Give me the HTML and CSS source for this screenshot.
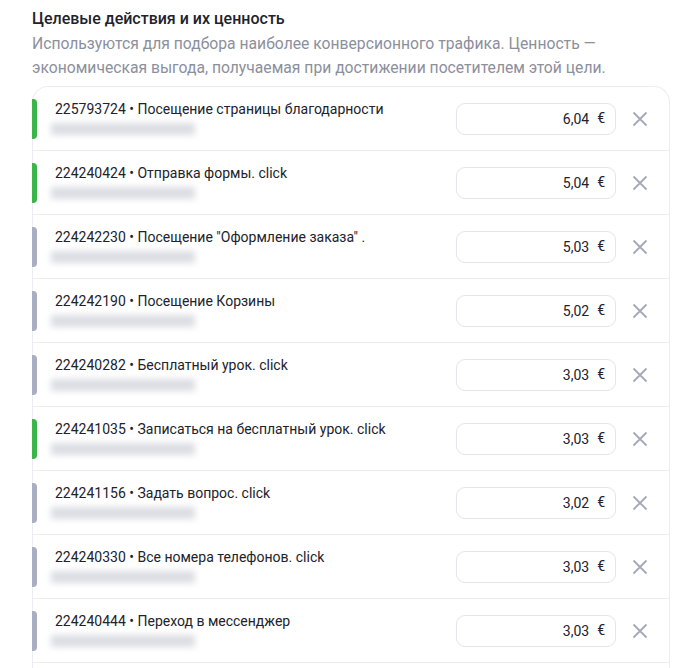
FILE: index.html
```html
<!DOCTYPE html>
<html lang="ru">
<head>
    <meta charset="UTF-8">
    <meta name="viewport" content="width=device-width, initial-scale=1.0">
    <title>Целевые действия</title>
    <link rel="stylesheet" href="styles.css">
</head>
<body>
    <div class="section">
        <h2 class="title">Целевые действия и их ценность</h2>
        <p class="hint">Используются для подбора наиболее конверсионного трафика. Ценность —
            экономическая выгода, получаемая при достижении посетителем этой цели.</p>

        <div class="goals">
            <div class="goal">
                <span class="mark mark-on"></span>
                <div class="goal-info">
                    <div class="goal-name">225793724 • Посещение страницы благодарности</div>
                    <div class="goal-sub"></div>
                </div>
                <div class="price"><span>6,04</span><span class="cur">€</span></div>
                <button class="remove" aria-label="Удалить"><svg viewBox="0 0 16 16"><path d="M1.5 1.5l13 13M14.5 1.5l-13 13"/></svg></button>
            </div>
            <div class="goal">
                <span class="mark mark-on"></span>
                <div class="goal-info">
                    <div class="goal-name">224240424 • Отправка формы. click</div>
                    <div class="goal-sub"></div>
                </div>
                <div class="price"><span>5,04</span><span class="cur">€</span></div>
                <button class="remove" aria-label="Удалить"><svg viewBox="0 0 16 16"><path d="M1.5 1.5l13 13M14.5 1.5l-13 13"/></svg></button>
            </div>
            <div class="goal">
                <span class="mark"></span>
                <div class="goal-info">
                    <div class="goal-name">224242230 • Посещение "Оформление заказа" .</div>
                    <div class="goal-sub"></div>
                </div>
                <div class="price"><span>5,03</span><span class="cur">€</span></div>
                <button class="remove" aria-label="Удалить"><svg viewBox="0 0 16 16"><path d="M1.5 1.5l13 13M14.5 1.5l-13 13"/></svg></button>
            </div>
            <div class="goal">
                <span class="mark"></span>
                <div class="goal-info">
                    <div class="goal-name">224242190 • Посещение Корзины</div>
                    <div class="goal-sub"></div>
                </div>
                <div class="price"><span>5,02</span><span class="cur">€</span></div>
                <button class="remove" aria-label="Удалить"><svg viewBox="0 0 16 16"><path d="M1.5 1.5l13 13M14.5 1.5l-13 13"/></svg></button>
            </div>
            <div class="goal">
                <span class="mark"></span>
                <div class="goal-info">
                    <div class="goal-name">224240282 • Бесплатный урок. click</div>
                    <div class="goal-sub"></div>
                </div>
                <div class="price"><span>3,03</span><span class="cur">€</span></div>
                <button class="remove" aria-label="Удалить"><svg viewBox="0 0 16 16"><path d="M1.5 1.5l13 13M14.5 1.5l-13 13"/></svg></button>
            </div>
            <div class="goal">
                <span class="mark mark-on"></span>
                <div class="goal-info">
                    <div class="goal-name">224241035 • Записаться на бесплатный урок. click</div>
                    <div class="goal-sub"></div>
                </div>
                <div class="price"><span>3,03</span><span class="cur">€</span></div>
                <button class="remove" aria-label="Удалить"><svg viewBox="0 0 16 16"><path d="M1.5 1.5l13 13M14.5 1.5l-13 13"/></svg></button>
            </div>
            <div class="goal">
                <span class="mark"></span>
                <div class="goal-info">
                    <div class="goal-name">224241156 • Задать вопрос. click</div>
                    <div class="goal-sub"></div>
                </div>
                <div class="price"><span>3,02</span><span class="cur">€</span></div>
                <button class="remove" aria-label="Удалить"><svg viewBox="0 0 16 16"><path d="M1.5 1.5l13 13M14.5 1.5l-13 13"/></svg></button>
            </div>
            <div class="goal">
                <span class="mark"></span>
                <div class="goal-info">
                    <div class="goal-name">224240330 • Все номера телефонов. click</div>
                    <div class="goal-sub"></div>
                </div>
                <div class="price"><span>3,03</span><span class="cur">€</span></div>
                <button class="remove" aria-label="Удалить"><svg viewBox="0 0 16 16"><path d="M1.5 1.5l13 13M14.5 1.5l-13 13"/></svg></button>
            </div>
            <div class="goal">
                <span class="mark"></span>
                <div class="goal-info">
                    <div class="goal-name">224240444 • Переход в мессенджер</div>
                    <div class="goal-sub"></div>
                </div>
                <div class="price"><span>3,03</span><span class="cur">€</span></div>
                <button class="remove" aria-label="Удалить"><svg viewBox="0 0 16 16"><path d="M1.5 1.5l13 13M14.5 1.5l-13 13"/></svg></button>
            </div>
            <div class="goal">
                <span class="mark"></span>
                <div class="goal-info">
                    <div class="goal-name"></div>
                </div>
            </div>
        </div>
    </div>
</body>
</html>
```

FILE: styles.css
```css
body {
    margin: 0;
    font-family: Roboto, "Liberation Sans", sans-serif;
    background-color: #fff;
    color: #21222b;
    overflow: hidden;
}
.section {
    padding: 8px 0 0 32px;
}
.title {
    margin: 0;
    font-size: 16px;
    line-height: 22px;
    font-weight: 500;
}
.hint {
    margin: 2px 0 0;
    font-size: 15.7px;
    line-height: 24px;
    color: #8c8f9c;
}
.goals {
    margin-top: 6px;
    width: 636px;
    border: 1px solid #ececf2;
    border-bottom: none;
    border-radius: 16px 16px 0 0;
}
.goal {
    display: flex;
    align-items: center;
    height: 63px;
    border-bottom: 1px solid #ececf2;
    padding-right: 21px;
}
.mark {
    width: 5px;
    height: 40px;
    margin-left: -1px;
    border-radius: 0 4px 4px 0;
    background-color: #a9aec0;
}
.mark-on {
    background-color: #3bb54a;
}
.goal-info {
    margin-left: 18px;
    padding-bottom: 2px;
}
.goal-name {
    font-size: 14px;
    line-height: 20px;
}
.goal-sub {
    width: 144px;
    height: 12px;
    margin: 4px 0 2px -4px;
    background-color: #dcdde3;
    filter: blur(3px);
}
.price {
    margin-left: auto;
    display: flex;
    justify-content: flex-end;
    align-items: center;
    gap: 8px;
    box-sizing: border-box;
    width: 160px;
    height: 32px;
    padding-right: 10px;
    border: 1px solid #e3e4ee;
    border-radius: 9px;
    font-size: 14px;
}
.cur {
    font-size: 14px;
    margin-top: -1px;
}
.remove {
    margin-left: 16px;
    padding: 0;
    border: none;
    background: none;
    width: 16px;
    height: 16px;
}
.remove svg {
    display: block;
    width: 16px;
    height: 16px;
    fill: none;
    stroke: #a4a8b8;
    stroke-width: 1.8;
}
```
